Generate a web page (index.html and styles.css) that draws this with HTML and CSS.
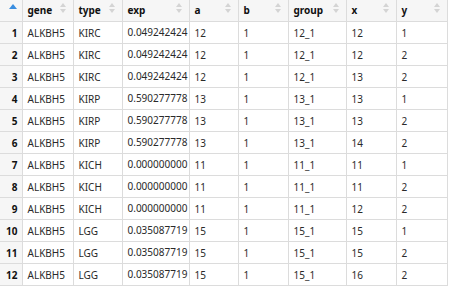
FILE: index.html
```html
<!DOCTYPE html>
<html lang="en">
<head>
    <meta charset="UTF-8">
    <title>Data viewer</title>
    <link rel="stylesheet" href="styles.css">
</head>
<body>
<table class="grid">
    <colgroup>
        <col class="c-num"><col class="c-gene"><col class="c-type"><col class="c-exp"><col class="c-a">
        <col class="c-b"><col class="c-group"><col class="c-x"><col class="c-y">
    </colgroup>
    <thead>
        <tr>
            <th class="num"><span class="sort-asc"></span></th>
            <th>gene<span class="sort"></span></th>
            <th>type<span class="sort"></span></th>
            <th>exp<span class="sort"></span></th>
            <th>a<span class="sort"></span></th>
            <th>b<span class="sort"></span></th>
            <th>group<span class="sort"></span></th>
            <th>x<span class="sort"></span></th>
            <th>y<span class="sort"></span></th>
        </tr>
    </thead>
    <tbody>
        <tr><td class="num">1</td><td>ALKBH5</td><td>KIRC</td><td class="up">0.049242424</td><td>12</td><td>1</td><td>12_1</td><td>12</td><td>1</td></tr>
        <tr><td class="num">2</td><td>ALKBH5</td><td>KIRC</td><td class="up">0.049242424</td><td>12</td><td>1</td><td>12_1</td><td>12</td><td>2</td></tr>
        <tr><td class="num">3</td><td>ALKBH5</td><td>KIRC</td><td class="up">0.049242424</td><td>12</td><td>1</td><td>12_1</td><td>13</td><td>2</td></tr>
        <tr><td class="num">4</td><td>ALKBH5</td><td>KIRP</td><td class="up">0.590277778</td><td>13</td><td>1</td><td>13_1</td><td>13</td><td>1</td></tr>
        <tr><td class="num">5</td><td>ALKBH5</td><td>KIRP</td><td class="up">0.590277778</td><td>13</td><td>1</td><td>13_1</td><td>13</td><td>2</td></tr>
        <tr><td class="num">6</td><td>ALKBH5</td><td>KIRP</td><td class="up">0.590277778</td><td>13</td><td>1</td><td>13_1</td><td>14</td><td>2</td></tr>
        <tr><td class="num">7</td><td>ALKBH5</td><td>KICH</td><td class="up">0.000000000</td><td>11</td><td>1</td><td>11_1</td><td>11</td><td>1</td></tr>
        <tr><td class="num">8</td><td>ALKBH5</td><td>KICH</td><td class="up">0.000000000</td><td>11</td><td>1</td><td>11_1</td><td>11</td><td>2</td></tr>
        <tr><td class="num">9</td><td>ALKBH5</td><td>KICH</td><td class="up">0.000000000</td><td>11</td><td>1</td><td>11_1</td><td>12</td><td>2</td></tr>
        <tr><td class="num">10</td><td>ALKBH5</td><td>LGG</td><td class="up">0.035087719</td><td>15</td><td>1</td><td>15_1</td><td>15</td><td>1</td></tr>
        <tr><td class="num">11</td><td>ALKBH5</td><td>LGG</td><td class="up">0.035087719</td><td>15</td><td>1</td><td>15_1</td><td>15</td><td>2</td></tr>
        <tr><td class="num">12</td><td>ALKBH5</td><td>LGG</td><td class="up">0.035087719</td><td>15</td><td>1</td><td>15_1</td><td>16</td><td>2</td></tr>
    </tbody>
</table>
</body>
</html>
```

FILE: styles.css
```css
* {
    margin: 0;
    padding: 0;
    box-sizing: border-box;
}

body {
    font-family: "Noto Sans", "Open Sans", sans-serif;
    font-size: 10px;
    color: #2a2a2a;
    background: #fff;
}

.grid {
    border-collapse: collapse;
    table-layout: fixed;
    width: 447px;
}

.c-num { width: 22px; }
.c-gene { width: 51px; }
.c-type { width: 49px; }
.c-exp { width: 67px; }
.c-a { width: 49px; }
.c-b { width: 50px; }
.c-group { width: 58px; }
.c-x { width: 50px; }
.c-y { width: 51px; }

th, td {
    border: 1px solid #dcdcdc;
    text-align: left;
    white-space: nowrap;
    overflow: hidden;
}

th {
    position: relative;
    height: 21px;
    padding: 2px 5px 0;
    background: #f6f6f6;
    font-weight: 700;
    color: #111;
    vertical-align: top;
    line-height: 16px;
    border-top: none;
}

td {
    height: 22px;
    padding: 2px 5px 0;
    vertical-align: middle;
    line-height: 14px;
}

th:first-child, td:first-child {
    border-left: none;
}

td.num, th.num {
    background: #f6f6f6;
    text-align: right;
    font-weight: 700;
    color: #111;
    padding: 1px 4px 0 0;
}

td.up {
    padding-top: 0;
}

/* sort arrows in header */
.sort {
    position: absolute;
    right: 7px;
    top: 3px;
    width: 6px;
    height: 10px;
}

.sort::before, .sort::after {
    content: "";
    position: absolute;
    left: 0;
    border-left: 3px solid transparent;
    border-right: 3px solid transparent;
}

.sort::before {
    top: 0;
    border-bottom: 4px solid #d4d4d4;
}

.sort::after {
    bottom: 0;
    border-top: 4px solid #d4d4d4;
}

.sort-asc {
    position: absolute;
    left: 9px;
    top: 4px;
    border-left: 4px solid transparent;
    border-right: 4px solid transparent;
    border-bottom: 5px solid #3a8ee0;
}
```
